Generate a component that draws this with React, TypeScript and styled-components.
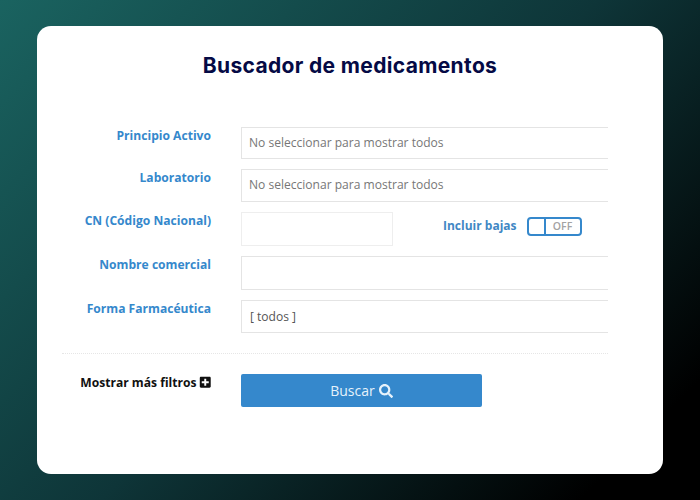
import React from "react";
import styled, { createGlobalStyle } from "styled-components";
import { FaPlusSquare, FaSearch } from "react-icons/fa";

const GlobalStyle = createGlobalStyle`
  html, body {
    margin: 0;
    padding: 0;
    height: 100%;
  }
  #root {
    height: 100%;
  }
`;

const Page = styled.div`
  width: 700px;
  height: 500px;
  box-sizing: border-box;
  padding: 26px 37px;
  background: linear-gradient(135deg, #1a6360 0%, #0e3538 50%, #000000 90%);
  font-family: "Open Sans", "Liberation Sans", sans-serif;
`;

const Card = styled.main`
  height: 448px;
  box-sizing: border-box;
  padding: 27px 55px 0 25px;
  background: #ffffff;
  border-radius: 14px;
`;

const Title = styled.h1`
  margin: 0 0 48px;
  padding-left: 30px;
  height: 26px;
  line-height: 26px;
  text-align: center;
  font-family: Inter, "Open Sans", sans-serif;
  font-size: 21px;
  font-weight: 700;
  letter-spacing: 0.35px;
  color: #050a45;
`;

const Form = styled.form`
  display: grid;
  grid-template-columns: 149px 367px;
  column-gap: 30px;
  overflow: hidden;
`;

const Label = styled.label<{ $top: number; $height: number }>`
  margin-top: ${(p) => p.$top}px;
  height: ${(p) => p.$height}px;
  text-align: right;
  line-height: 17px;
  font-size: 12.1px;
  font-weight: 700;
  color: #3588cc;
  white-space: nowrap;
`;

const Field = styled.div<{ $top: number; $height: number; $select?: boolean }>`
  box-sizing: border-box;
  width: 380px;
  height: ${(p) => p.$height}px;
  margin-top: ${(p) => p.$top}px;
  padding: 0 0 ${(p) => (p.$select ? 0 : 2)}px 7px;
  display: flex;
  align-items: center;
  border: 1px solid #e4e4e4;
  font-size: 12.05px;
  color: #777777;
`;

const SelectValue = styled.span`
  padding-left: 1px;
  color: #555555;
`;

const CodeRow = styled.div`
  display: flex;
  align-items: flex-start;
  margin-top: 10px;
  height: 34px;
`;

const CodeInput = styled.div`
  box-sizing: border-box;
  width: 152px;
  height: 34px;
  border: 1px solid #eeeeee;
`;

const BajasLabel = styled.span`
  margin: 5px 0 0 50px;
  line-height: 17px;
  font-size: 12px;
  font-weight: 700;
  color: #3f87c4;
  white-space: nowrap;
`;

const Toggle = styled.div`
  box-sizing: border-box;
  display: flex;
  width: 55px;
  height: 19px;
  margin: 5px 0 0 10px;
  border: 2px solid #3588cc;
  border-radius: 4px;
`;

const ToggleHandle = styled.span`
  width: 15px;
  border-right: 2px solid #3588cc;
`;

const ToggleText = styled.span`
  flex: 1;
  text-align: center;
  line-height: 15px;
  font-size: 10.5px;
  font-weight: 600;
  color: #a3a3a3;
`;

const Divider = styled.hr`
  grid-column: 1 / -1;
  width: 100%;
  margin: 20px 0 20px;
  border: 0;
  border-top: 1px dotted #e6e6e6;
`;

const MoreFilters = styled.div`
  display: flex;
  justify-content: flex-end;
  align-items: center;
  gap: 2px;
  height: 17px;
  font-size: 12.1px;
  font-weight: 700;
  color: #111111;
  white-space: nowrap;
`;

const SearchButton = styled.button`
  box-sizing: border-box;
  display: flex;
  align-items: center;
  justify-content: center;
  gap: 4px;
  width: 241px;
  height: 33px;
  padding: 0;
  border: 0;
  border-radius: 2px;
  background: #3588cc;
  font-family: inherit;
  font-size: 14px;
  color: #e6f2fb;
`;

export default function App() {
  return (
    <>
      <GlobalStyle />
      <Page>
        <Card>
          <Title>Buscador de medicamentos</Title>
          <Form>
            <Label $top={0} $height={31}>Principio Activo</Label>
            <Field $top={0} $height={32}>No seleccionar para mostrar todos</Field>

            <Label $top={10} $height={32}>Laboratorio</Label>
            <Field $top={10} $height={33}>No seleccionar para mostrar todos</Field>

            <Label $top={10} $height={34}>CN (Código Nacional)</Label>
            <CodeRow>
              <CodeInput />
              <BajasLabel>Incluir bajas</BajasLabel>
              <Toggle>
                <ToggleHandle />
                <ToggleText>OFF</ToggleText>
              </Toggle>
            </CodeRow>

            <Label $top={10} $height={34}>Nombre comercial</Label>
            <Field $top={10} $height={34} />

            <Label $top={10} $height={32}>Forma Farmacéutica</Label>
            <Field $top={10} $height={33} $select>
              <SelectValue>[ todos ]</SelectValue>
            </Field>

            <Divider />

            <MoreFilters>
              Mostrar más filtros <FaPlusSquare size={12.5} />
            </MoreFilters>
            <SearchButton type="button">
              Buscar <FaSearch size={14} />
            </SearchButton>
          </Form>
        </Card>
      </Page>
    </>
  );
}
